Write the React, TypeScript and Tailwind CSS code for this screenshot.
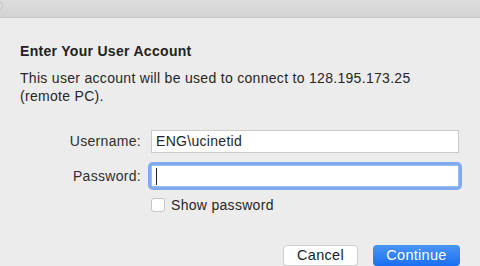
import React from "react";

export default function App() {
  return (
    <div
      className="w-[480px] h-[266px] overflow-hidden bg-[#ececec] text-[#262626] text-[14px] tracking-[0.3px]"
      style={{ fontFamily: '"Liberation Sans", Arial, sans-serif' }}
    >
      {/* title bar */}
      <div className="relative h-[18px] bg-gradient-to-b from-[#dedede] to-[#d3d3d3] border-b border-[#c6c6c6]">
        <div className="absolute -left-[9px] top-0 w-[12px] h-[12px] rounded-full border border-[#c2c2c2] bg-[#dadada]" />
      </div>

      <div className="pl-[20px] pr-[21px]">
        <h1 className="mt-[24px] font-bold leading-[19px] text-[#222]">Enter Your User Account</h1>
        <p className="mt-[8px] leading-[18px]">
          This user account will be used to connect to 128.195.173.25
          <br />
          (remote PC).
        </p>

        <div className="mt-[25px] flex items-center gap-[10px]">
          <label className="w-[121px] text-right text-[#2e2e2e]">Username:</label>
          <div className="w-[308px] h-[23px] bg-white border border-[#cacaca] flex items-center px-[4px]">
            ENG\ucinetid
          </div>
        </div>

        <div className="mt-[12px] flex items-center gap-[10px]">
          <label className="w-[121px] text-right text-[#2e2e2e]">Password:</label>
          <div className="w-[308px] h-[22px] bg-white border border-[#9fbff0] rounded-[2px] ring-[3px] ring-[#7faaf0] flex items-center px-[4px]">
            <div className="w-px h-[17px] bg-[#222]" />
          </div>
        </div>

        <div className="mt-[10px] ml-[131px] flex items-center gap-[6px]">
          <div className="w-[14px] h-[14px] rounded-[3px] bg-white border border-[#c4c4c4]" />
          <span className="leading-[16px]">Show password</span>
        </div>

        <div className="mt-[32px] flex justify-end gap-[15px]">
          <button className="w-[75px] h-[21px] rounded-[4px] bg-white border border-[#cfcfcf] shadow-[0_1px_1px_rgba(0,0,0,0.08)] text-[#222] text-[14.5px] leading-none tracking-[0.3px]">
            Cancel
          </button>
          <button className="w-[87px] h-[21px] rounded-[4px] bg-gradient-to-b from-[#4a95f7] to-[#1a6ef2] text-white text-[14.5px] leading-none tracking-[0.3px] mr-[-1px]">
            Continue
          </button>
        </div>
      </div>
    </div>
  );
}
